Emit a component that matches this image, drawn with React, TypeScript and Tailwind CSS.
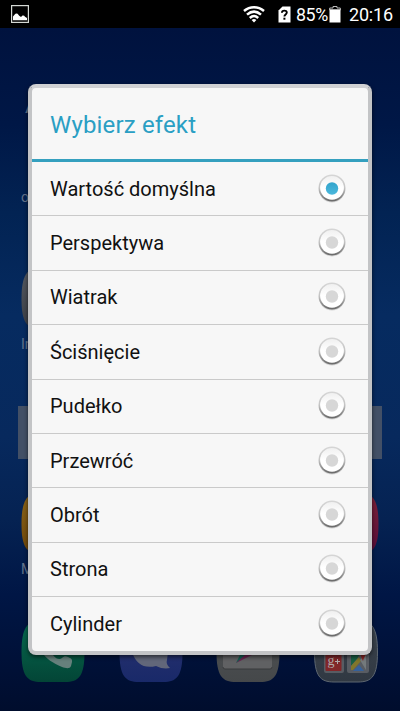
import React from 'react';

const effects = [
  'Wartość domyślna',
  'Perspektywa',
  'Wiatrak',
  'Ściśnięcie',
  'Pudełko',
  'Przewróć',
  'Obrót',
  'Strona',
  'Cylinder',
];

const tile = 'M20 0.5H44C58 0.5 63.5 8 63.5 32C63.5 56 58 62 44 62H20C6 62 0.5 56 0.5 32C0.5 8 6 0.5 20 0.5Z';

const StatusBar: React.FC = () => (
  <div className="flex h-7 shrink-0 items-center justify-between bg-black pl-[11px] pr-[6px] text-white">
    <svg width="18" height="18" viewBox="0 0 18 18">
      <rect x="0.6" y="0.6" width="16.8" height="16.8" fill="none" stroke="#d4d8d4" strokeWidth="1.2" />
      <path d="M2 15.3V11.5L3.5 9.8Q5 7.6 6.6 8.8L8.2 10.8L10 12L11.5 10.6Q13 10 14 11.8L16 13V15.3Z" fill="#fff" />
    </svg>
    <div className="flex items-center">
      <svg width="22" height="18" viewBox="0 0 22 18" fill="none" stroke="#fff" strokeWidth="2.5">
        <path d="M1 6C7 1 15 1 21 6" />
        <path d="M4 9.6C8.4 5.8 13.6 5.8 18 9.6" />
        <path d="M6.8 13C9.4 10.6 12.6 10.6 15.2 13" />
        <path d="M8.6 15Q11 13.2 13.4 15L11 17.6Z" fill="#fff" stroke="none" />
      </svg>
      <svg className="ml-[13px]" width="13" height="17" viewBox="0 0 13 17">
        <path d="M4.5 0.5H12.5V16.5H0.5V4.5Z" fill="#fff" />
        <path d="M3.9 6.7C4 3.9 8.8 3.9 8.8 6.6C8.8 8.4 6.4 8.5 6.4 10.4" fill="none" stroke="#000" strokeWidth="1.9" />
        <rect x="5.4" y="11.7" width="2" height="2" fill="#000" />
      </svg>
      <span className="ml-[5px] w-[33px] whitespace-nowrap pt-px text-[17.8px] leading-7 tracking-[-0.4px]">85%</span>
      <svg width="12" height="18" viewBox="0 0 12 18">
        <path d="M4 3V1.5H8V3H11.3V5H0.7V3Z" fill="none" stroke="#bbb" strokeWidth="1" />
        <path d="M0.5 4.5H11.5V17.5H0.5Z" fill="#fff" />
      </svg>
      <span className="ml-[8px] w-[45px] whitespace-nowrap pt-px text-[18px] leading-7 tracking-[-0.2px]">20:16</span>
    </div>
  </div>
);

const AppIcon: React.FC<{ id: string; top: string; bottom: string; edge?: string; children?: React.ReactNode }> = ({
  id,
  top,
  bottom,
  edge,
  children,
}) => (
  <svg className="block" width="64" height="63" viewBox="0 0 64 63">
    <defs>
      <linearGradient id={id} x1="0" y1="0" x2="0" y2="1">
        <stop offset="0" stopColor={top} />
        <stop offset="1" stopColor={bottom} />
      </linearGradient>
    </defs>
    <path d={tile} fill={`url(#${id})`} stroke={edge} />
    {children}
  </svg>
);

const HomeScreen: React.FC = () => (
  <div className="flex flex-1 flex-col bg-[linear-gradient(180deg,#00123e_0%,#001746_14%,#022353_27%,#062b60_42%,#07295d_60%,#052252_72%,#001645_83%,#001036_94%,#000d2d_100%)] px-[21px] text-[14px] leading-4 text-[#62728a]">
    <div className="flex h-[161px] flex-col pl-[4px] pt-[68px] text-[22px] leading-5">A</div>
    <div className="flex h-4 items-center">o</div>
    <div className="mt-[62px]">
      <AppIcon id="browser" top="#555a62" bottom="#3b3e45" />
      <div className="mt-[6px]">In</div>
    </div>
    <div className="-mx-[3px] mt-[54px] h-[53px] shrink-0 bg-[#435066]" />
    <div className="mt-[33px] flex justify-between">
      <div>
        <AppIcon id="music" top="#8b6419" bottom="#6d460c" />
        <div className="mt-[6px]">M</div>
      </div>
      <AppIcon id="video" top="#7d2138" bottom="#560d3a" />
    </div>
    <div className="mt-[43px] flex justify-between pr-px">
      <AppIcon id="phone" top="#066b50" bottom="#034536">
        <path d="M21 32L29 31C33 37 37 41 41 38C43 36 45 36 47 37L50 38.5Q51.5 39.5 51 42L50 46C49 49 45 48.500 41 47C32 43 25 39 21 32Z" fill="#66807c" />
      </AppIcon>
      <AppIcon id="messages" top="#2c3470" bottom="#192969">
        <path d="M13 32C17 44 25 49 37 46C42 48.500 47 49 51 48C48 45 47 43 48 40L49 32Z" fill="#62677a" />
      </AppIcon>
      <AppIcon id="play" top="#505356" bottom="#45484a">
        <path d="M8 12H56V47Q56 49 54 49H9Q7 49 7 47V12Z" fill="#606163" />
        <path d="M7 47Q7 49 9 49H54Q56 49 56 47" fill="none" stroke="#393b3d" />
        <path d="M20 43L25 33L33 34Z" fill="#125e52" />
        <path d="M20 43L30 34L40 33Z" fill="#6a2350" />
      </AppIcon>
      <AppIcon id="folder" top="#3d454f" bottom="#303842" edge="#5d6670">
        <path d="M10 29H30V51Q30 53 28 53H12Q10 53 10 51ZM33 29H55V51Q55 53 53 53H35Q33 53 33 51Z" fill="#585c63" />
        <rect x="11.500" y="30" width="16" height="21" rx="1" fill="#812629" />
        <text x="13.500" y="45" fontSize="14" fill="#b0a9aa" fontFamily="Liberation Serif, serif">g</text>
        <path d="M21 41.500H26M23.500 39V44" stroke="#b0a9aa" />
        <path d="M37 30H48L43 39L37 46Z" fill="#176044" />
        <path d="M37 50V46L45 37L47 41L39 50Z" fill="#80762b" />
        <path d="M39 51L45 45L50 51Z" fill="#35619b" />
        <path d="M46 40L52 50V34Z" fill="#747a7c" />
        <path d="M46 29H53C54 34 50 36 49 41C47 37 46 34 46 29Z" fill="#8b2525" />
      </AppIcon>
    </div>
  </div>
);

const Radio: React.FC<{ checked: boolean }> = ({ checked }) => (
  <svg className="block" width="30" height="32" viewBox="0 0 30 32">
    <defs>
      <linearGradient id="rim" x1="0" y1="0" x2="0" y2="1">
        <stop offset="0" stopColor="#d6d6d6" />
        <stop offset="0.5" stopColor="#c4c4c4" />
        <stop offset="1" stopColor="#666" />
      </linearGradient>
      <linearGradient id="face" x1="0" y1="0" x2="0" y2="1">
        <stop offset="0" stopColor="#f0f0f0" />
        <stop offset="0.5" stopColor="#fff" />
      </linearGradient>
      <linearGradient id="blue" x1="0" y1="0" x2="0" y2="1">
        <stop offset="0" stopColor="#32a4cb" />
        <stop offset="1" stopColor="#4bb8dd" />
      </linearGradient>
    </defs>
    <circle cx="15" cy="16.5" r="13" fill="#d4d4d4" />
    <circle cx="15" cy="15" r="13.500" fill="url(#rim)" />
    <circle cx="15" cy="14.800" r="11.900" fill="url(#face)" />
    <circle cx="15" cy="15.500" r="6.200" fill={checked ? 'url(#blue)' : '#d7d7d7'} />
  </svg>
);

const EffectDialog: React.FC = () => (
  <div className="absolute inset-x-7 top-[84px] h-[571px] rounded-lg border-4 border-[#c3c4c6] border-t-[#d0d1d4] bg-[#f7f7f7] shadow-[0_2px_4px_rgba(0,0,0,0.6)]">
    <h1 className="flex h-[74px] items-center border-b-3 border-[#35a0bf] pl-[18px] pt-[2px] text-[24px] font-normal tracking-[0.15px] text-[#2a9fc4]">
      Wybierz efekt
    </h1>
    <ul>
      {effects.map((name, i) => (
        <li
          key={name}
          className="flex h-[54.4px] items-center justify-between border-b border-[#cacaca] pl-[18px] pr-[21px] text-[20px] text-[#111] last:border-b-0"
        >
          <span>{name}</span>
          <Radio checked={i === 0} />
        </li>
      ))}
    </ul>
  </div>
);

const App: React.FC = () => {
  return (
    <div className="relative flex h-[711px] w-[400px] flex-col overflow-hidden font-[Roboto,sans-serif]">
      <StatusBar />
      <HomeScreen />
      <EffectDialog />
    </div>
  );
};

export default App;
